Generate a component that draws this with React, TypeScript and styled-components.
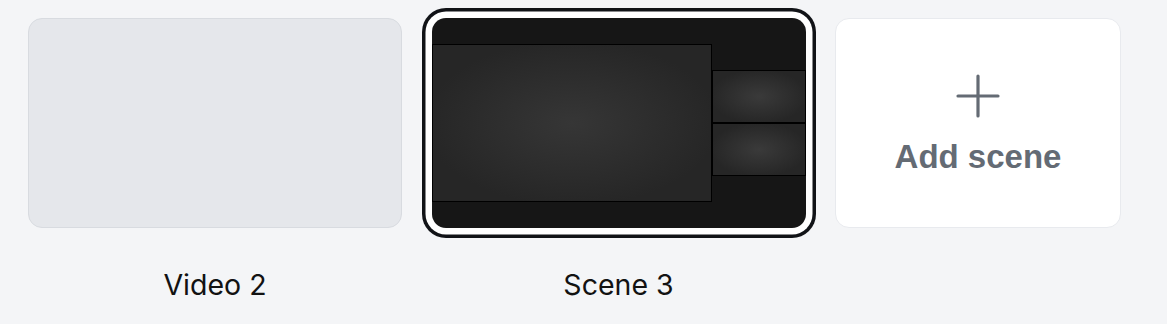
import React from "react";
import styled, { createGlobalStyle, css } from "styled-components";

const Global = createGlobalStyle`
  html, body { margin: 0; padding: 0; background: #f4f5f7; }
  body { font-family: Inter, "Liberation Sans", sans-serif; }
`;

const Strip = styled.div`
  display: flex;
  align-items: flex-start;
  gap: 29.5px;
  padding: 18px 0 0 28px;
  height: 324px;
  box-sizing: border-box;
`;

const Column = styled.div`
  display: flex;
  flex-direction: column;
  align-items: center;
`;

type Variant = "empty" | "scene" | "add";

const Card = styled.div<{ $variant: Variant; $selected?: boolean; $w: number }>`
  width: ${(p) => p.$w}px;
  height: 210px;
  box-sizing: border-box;
  border-radius: 14px;
  overflow: hidden;
  ${(p) =>
    p.$variant === "empty" &&
    css`
      background: #e5e7eb;
      border: 1px solid #d8dbe0;
    `}
  ${(p) =>
    p.$variant === "scene" &&
    css`
      background: #161616;
      display: flex;
      align-items: center;
    `}
  ${(p) =>
    p.$variant === "add" &&
    css`
      background: #ffffff;
      border: 1px solid #e8eaee;
      display: flex;
      flex-direction: column;
      align-items: center;
      justify-content: center;
      gap: 21px;
      padding-top: 3px;
      cursor: pointer;
    `}
  ${(p) =>
    p.$selected &&
    css`
      box-shadow: 0 0 0 6.5px #ffffff, 0 0 0 10px #111317;
    `}
`;

const Tile = styled.div<{ $main?: boolean }>`
  box-sizing: border-box;
  width: 100%;
  aspect-ratio: 16 / 9;
  border: 1px solid #000;
  background: radial-gradient(
    ellipse at center,
    ${(p) => (p.$main ? "#363636" : "#3a3a3a")} 0%,
    #262626 75%
  );
`;

const MainArea = styled.div`
  flex: 0 0 75%;
`;

const SideStack = styled.div`
  flex: 0 0 25%;
  display: flex;
  flex-direction: column;
`;

const Label = styled.div`
  margin-top: 40px;
  font-size: 28.5px;
  line-height: 34px;
  color: #121212;
  font-weight: 400;
`;

const AddText = styled.div`
  font-family: "Liberation Sans", Arial, sans-serif;
  font-weight: 700;
  font-size: 33px;
  line-height: 36px;
  color: #646b74;
`;

const PlusIcon = () => (
  <svg width="44" height="44" viewBox="0 0 44 44" aria-hidden>
    <path
      d="M2 22H42M22 2V42"
      stroke="#646b74"
      strokeWidth="3.2"
      strokeLinecap="round"
      fill="none"
    />
  </svg>
);

export default function App() {
  return (
    <>
      <Global />
      <Strip>
        <Column>
          <Card $variant="empty" $w={374} />
          <Label>Video 2</Label>
        </Column>
        <Column>
          <Card $variant="scene" $w={374} $selected>
            <MainArea>
              <Tile $main />
            </MainArea>
            <SideStack>
              <Tile />
              <Tile />
            </SideStack>
          </Card>
          <Label>Scene 3</Label>
        </Column>
        <Column>
          <Card $variant="add" $w={286}>
            <PlusIcon />
            <AddText>Add scene</AddText>
          </Card>
        </Column>
      </Strip>
    </>
  );
}
